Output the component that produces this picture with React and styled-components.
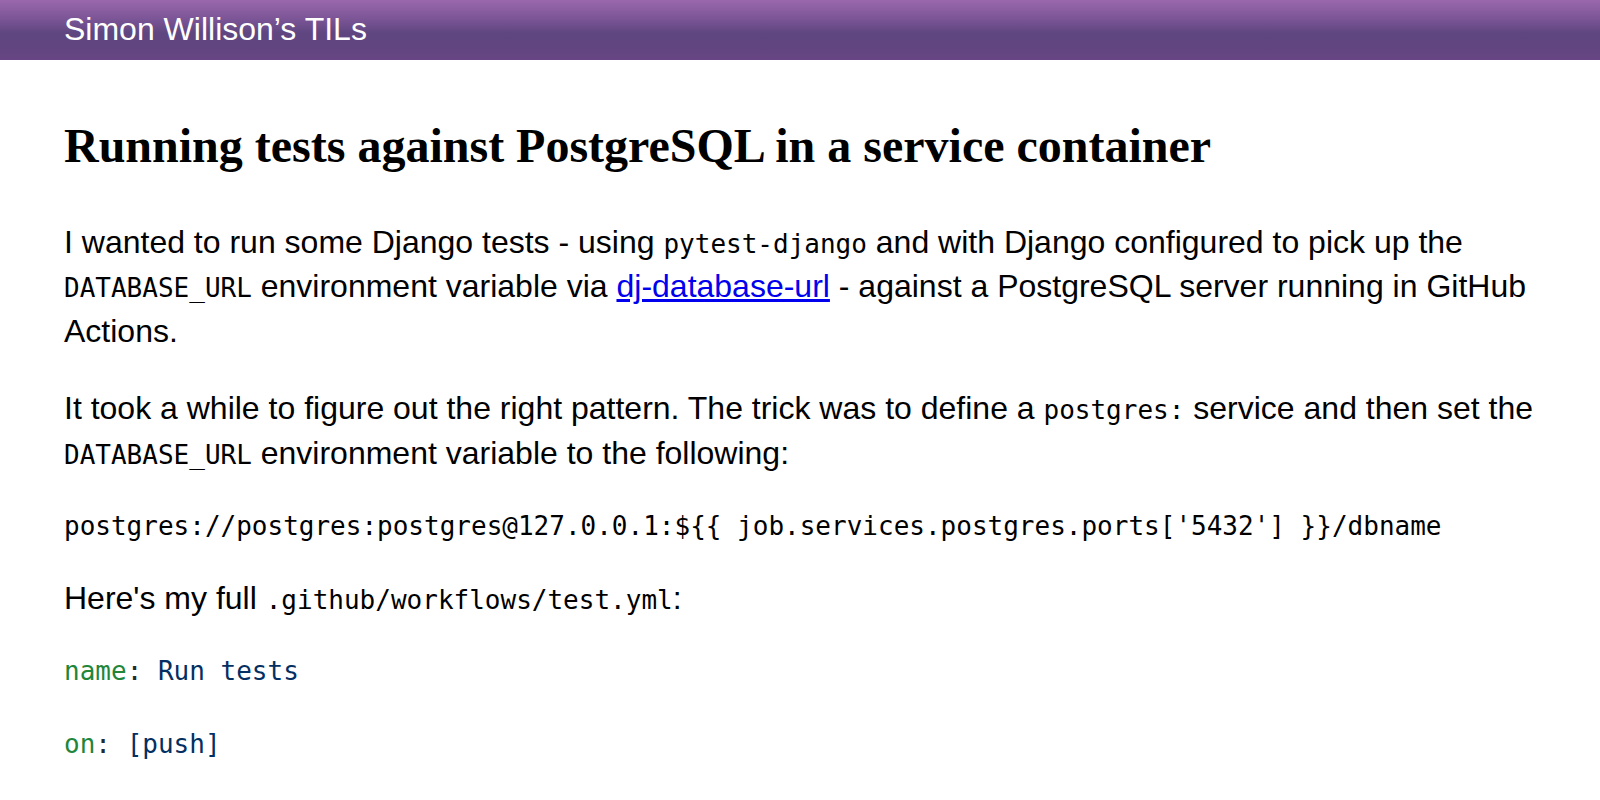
import React from "react";
import styled, { createGlobalStyle } from "styled-components";

const Global = createGlobalStyle`
  html, body { margin: 0; padding: 0; background: #fff; }
  body {
    font-family: "Liberation Sans", Arial, Helvetica, sans-serif;
    font-size: 32px;
    line-height: 1.4;
    color: #000;
  }
`;

const Header = styled.header`
  height: 60px;
  box-sizing: border-box;
  padding: 0 64px;
  display: flex;
  align-items: center;
  background: linear-gradient(to bottom, #9a68ad 0%, #7d5697 30%, #5f4681 55%, #614580 80%, #684584 100%);
`;

const SiteTitle = styled.a`
  color: #fff;
  text-decoration: none;
  font-family: "Liberation Sans", Arial, sans-serif;
  font-size: 32px;
  line-height: 1;
  padding-bottom: 2px;
`;

const Main = styled.main`
  padding: 0 64px;
`;

const Title = styled.h1`
  font-family: "Liberation Serif", "Times New Roman", serif;
  font-weight: bold;
  font-size: 48px;
  line-height: 1.2;
  margin: 57px 0 45px;
`;

const P = styled.p`
  margin: 32px 0;
`;

const Code = styled.code`
  font-family: "DejaVu Sans Mono", monospace;
  font-size: 26px;
`;

const Link = styled.a`
  color: #0000ee;
  text-decoration: underline;
`;

const Pre = styled.pre`
  font-family: "DejaVu Sans Mono", monospace;
  font-size: 26px;
  line-height: 1.4;
  margin: 32px 0;
  white-space: pre;
`;

const Key = styled.span`
  color: #22863a;
`;

const Val = styled.span`
  color: #032f62;
`;

const Punct = styled.span`
  color: #24292e;
`;

export default function App() {
  return (
    <>
      <Global />
      <Header>
        <SiteTitle href="#">Simon Willison’s TILs</SiteTitle>
      </Header>
      <Main>
        <Title>Running tests against PostgreSQL in a service container</Title>
        <P>
          I wanted to run some Django tests - using <Code>pytest-django</Code> and with Django configured to pick up the{" "}
          <Code>DATABASE_URL</Code> environment variable via <Link href="#">dj-database-url</Link> - against a PostgreSQL
          server running in GitHub Actions.
        </P>
        <P>
          It took a while to figure out the right pattern. The trick was to define a <Code>postgres:</Code> service and
          then set the <Code>DATABASE_URL</Code> environment variable to the following:
        </P>
        <Pre>postgres://postgres:postgres@127.0.0.1:{"${{ job.services.postgres.ports['5432'] }}"}/dbname</Pre>
        <P>
          Here's my full <Code>.github/workflows/test.yml</Code>:
        </P>
        <Pre>
          <Key>name</Key>
          <Punct>: </Punct>
          <Val>Run tests</Val>
          {"\n\n"}
          <Key>on</Key>
          <Punct>: </Punct>
          <Val>[push]</Val>
          {"\n\n"}
          <Key>jobs</Key>
          <Punct>:</Punct>
          {"\n  "}
          <Key>test</Key>
          <Punct>:</Punct>
          {"\n    "}
          <Key>runs-on</Key>
          <Punct>: </Punct>
          <Val>ubuntu-latest</Val>
        </Pre>
      </Main>
    </>
  );
}
